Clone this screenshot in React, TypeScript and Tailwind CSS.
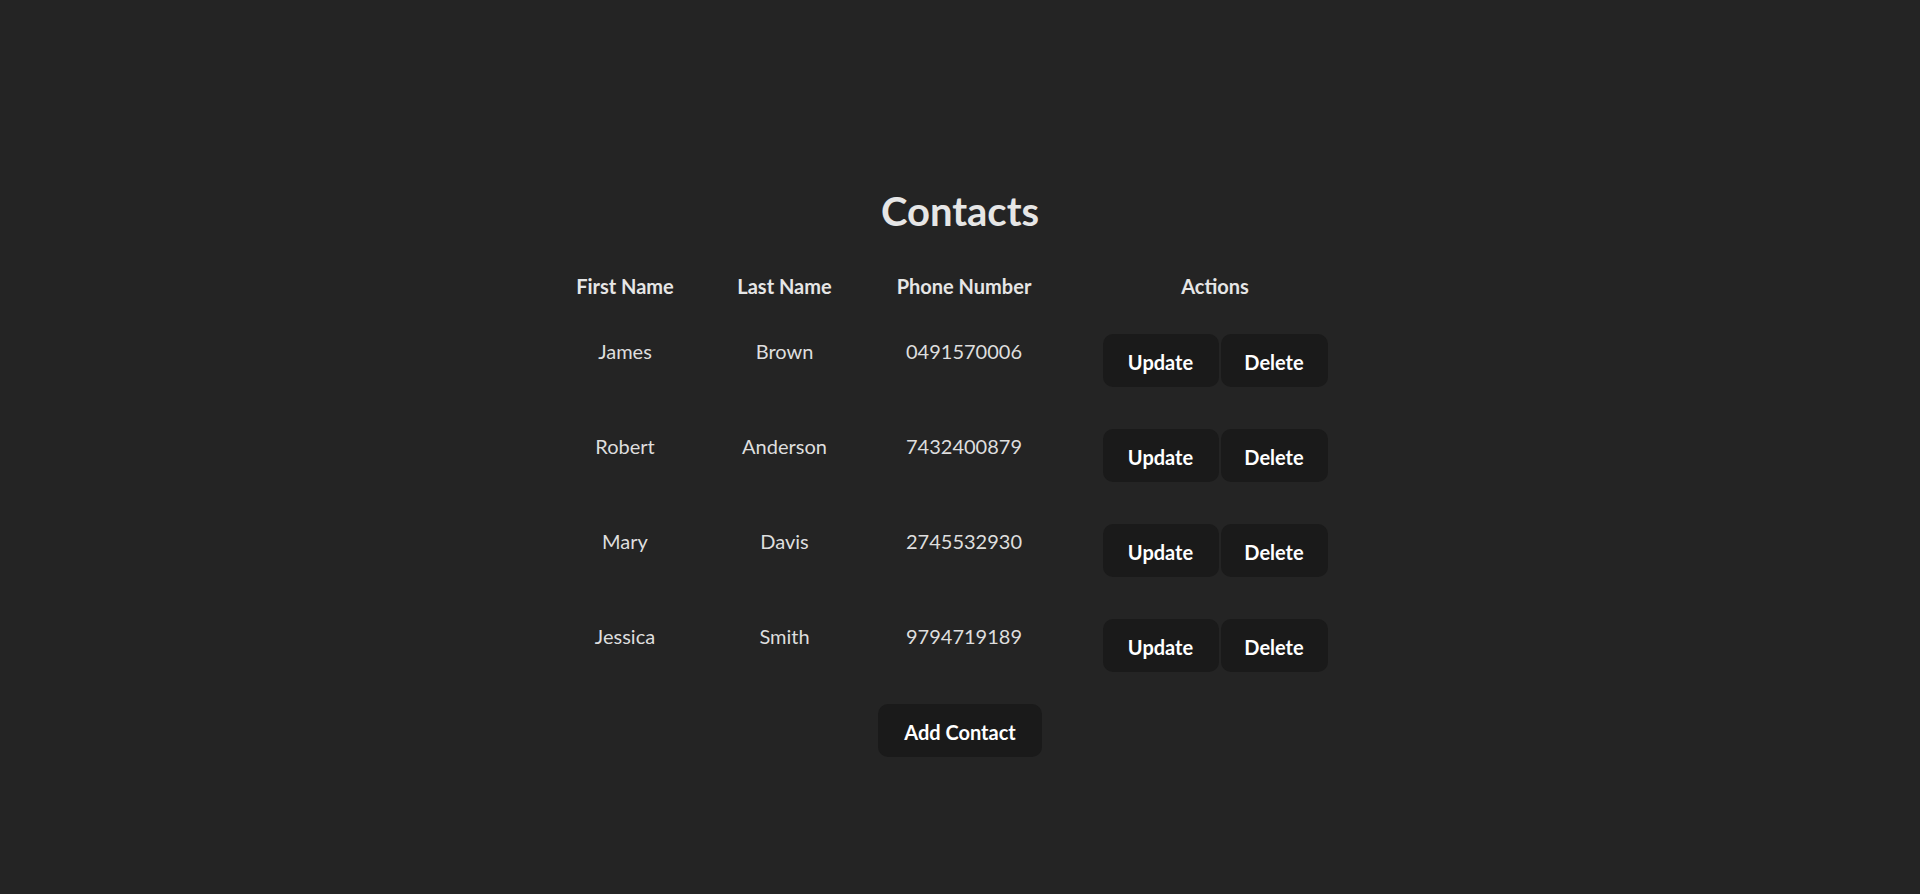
const contacts = [
  { first: "James", last: "Brown", phone: "0491570006" },
  { first: "Robert", last: "Anderson", phone: "7432400879" },
  { first: "Mary", last: "Davis", phone: "2745532930" },
  { first: "Jessica", last: "Smith", phone: "9794719189" },
];

const btn =
  "h-[53px] rounded-[10px] border border-transparent bg-[#1a1a1a] text-white text-[20px] font-bold leading-none";

export default function App() {
  return (
    <div className="min-h-screen bg-[#242424] text-[#dedede] font-['Lato','Segoe_UI',sans-serif] flex flex-col items-center pt-[190px]">
      <h1 className="text-[40px] font-bold leading-[42px] text-[#e6e6e6]">Contacts</h1>

      <div className="mt-[40px] pr-[9px]">
        <div className="grid grid-cols-[160px_159px_200px_302px] text-center text-[20px] leading-[29px] font-bold text-[#e6e6e6]">
          <div>First Name</div>
          <div>Last Name</div>
          <div>Phone Number</div>
          <div>Actions</div>
        </div>

        <div className="mt-[33px] flex flex-col gap-[42px]">
          {contacts.map((c) => (
            <div
              key={c.phone}
              className="grid grid-cols-[160px_159px_200px_302px] items-start text-center text-[20px] leading-[29px]"
            >
              <div className="pt-[3px]">{c.first}</div>
              <div className="pt-[3px]">{c.last}</div>
              <div className="pt-[3px]">{c.phone}</div>
              <div className="flex justify-center gap-[2px]">
                <button className={`${btn} w-[116px] pt-[2px]`}>Update</button>
                <button className={`${btn} w-[107px] pt-[2px]`}>Delete</button>
              </div>
            </div>
          ))}
        </div>
      </div>

      <button className={`${btn} mt-[32px] w-[164px] pt-[2px]`}>Add Contact</button>
    </div>
  );
}
